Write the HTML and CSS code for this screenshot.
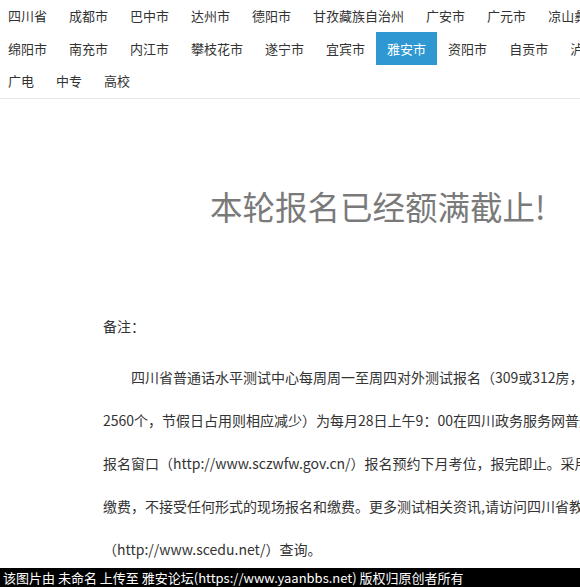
FILE: index.html
```html
<!DOCTYPE html>
<html lang="zh-CN">
<head>
<meta charset="utf-8">
<title>普通话水平测试报名</title>
<link rel="stylesheet" href="styles.css">
</head>
<body>
<nav class="nav">
  <div class="nav-row">
    <a class="nav-item">四川省</a><a class="nav-item">成都市</a><a class="nav-item">巴中市</a><a class="nav-item">达州市</a><a class="nav-item">德阳市</a><a class="nav-item">甘孜藏族自治州</a><a class="nav-item">广安市</a><a class="nav-item">广元市</a><a class="nav-item">凉山彝族自治州</a>
  </div>
  <div class="nav-row">
    <a class="nav-item">绵阳市</a><a class="nav-item">南充市</a><a class="nav-item">内江市</a><a class="nav-item">攀枝花市</a><a class="nav-item">遂宁市</a><a class="nav-item">宜宾市</a><a class="nav-item active">雅安市</a><a class="nav-item">资阳市</a><a class="nav-item">自贡市</a><a class="nav-item">泸州市</a>
  </div>
  <div class="nav-row">
    <a class="nav-item">广电</a><a class="nav-item">中专</a><a class="nav-item">高校</a>
  </div>
</nav>
<main class="main">
  <h1 class="closed">本轮报名已经额满截止!</h1>
  <section class="notes">
    <p class="notes-title">备注：</p>
    <p class="notes-body"><span class="indent">四川省普通话水平测试中心每周周一至周四对外测试报名（309或312房，每月考位约</span><br>2560个，节假日占用则相应减少）为每月28日上午9：00在四川政务服务网普通话水平测试<br>报名窗口（http://www.sczwfw.gov.cn/）报名预约下月考位，报完即止。采用网上报名、网上<br>缴费，不接受任何形式的现场报名和缴费。更多测试相关资讯,请访问四川省教育考试院网站<br>（http://www.scedu.net/）查询。</p>
  </section>
</main>
<div class="watermark">该图片由 未命名 上传至 雅安论坛(https://www.yaanbbs.net) 版权归原创者所有</div>
</body>
</html>
```

FILE: styles.css
```css
html, body {
  margin: 0;
  padding: 0;
  background: #fff;
  overflow: hidden;
}
body {
  font-family: "Noto Sans CJK SC", sans-serif;
  color: #333;
  font-size: 13px;
  width: 580px;
  height: 587px;
  position: relative;
}
.nav {
  margin-left: -3px;
  padding-bottom: 1px;
  border-bottom: 1px solid #e6e6e6;
}
.nav-row {
  white-space: nowrap;
  height: 32px;
  line-height: 32px;
  overflow: hidden;
}
.nav-row:nth-child(2) {
  height: 33px;
  line-height: 33px;
}
.nav-item {
  display: inline-block;
  padding: 0 11px;
  color: #333;
  text-decoration: none;
}
.nav-item.active {
  background: #2f98d3;
  color: #fff;
}
.main {
  padding-top: 87px;
}
.closed {
  margin: 0;
  padding-left: 210px;
  font-size: 32.5px;
  line-height: 40px;
  font-weight: normal;
  color: #7a7a7a;
  white-space: nowrap;
}
.notes {
  padding-left: 103px;
  padding-top: 79px;
  white-space: nowrap;
  font-size: 14px;
}
.notes p {
  margin: 0;
  line-height: 43px;
}
.notes-title {
  margin-bottom: 8px !important;
}
.indent {
  padding-left: 28px;
}
.watermark {
  position: absolute;
  left: 0;
  right: 0;
  bottom: 0;
  height: 19px;
  line-height: 19px;
  background: #000;
  color: #fff;
  font-size: 13px;
  padding-left: 3px;
  white-space: nowrap;
}
```
